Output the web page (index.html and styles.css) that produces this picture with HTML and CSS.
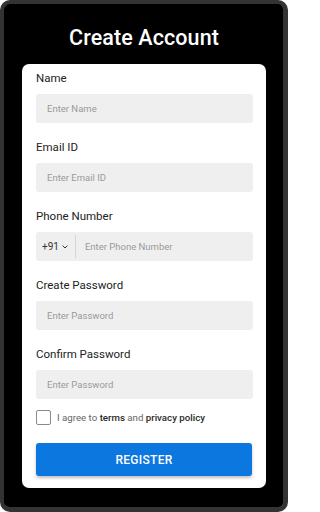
FILE: index.html
```html
<!DOCTYPE html>
<html>
<head>
<meta charset="utf-8">
<link rel="stylesheet" href="styles.css">
</head>
<body>
<div class="frame">
  <h1 class="title">Create Account</h1>
  <form class="card">
    <div class="field">
      <label class="label">Name</label>
      <div class="input"><span class="ph">Enter Name</span></div>
    </div>
    <div class="field">
      <label class="label">Email ID</label>
      <div class="input"><span class="ph">Enter Email ID</span></div>
    </div>
    <div class="field">
      <label class="label">Phone Number</label>
      <div class="input phone">
        <span class="code">+91
          <svg class="chev" width="6" height="4" viewBox="0 0 6 4"><path d="M0.6 0.6 L3 3 L5.4 0.6" fill="none" stroke="#333" stroke-width="1"/></svg>
        </span>
        <span class="divider"></span>
        <span class="ph">Enter Phone Number</span>
      </div>
    </div>
    <div class="field">
      <label class="label">Create Password</label>
      <div class="input"><span class="ph">Enter Password</span></div>
    </div>
    <div class="field">
      <label class="label">Confirm Password</label>
      <div class="input"><span class="ph">Enter Password</span></div>
    </div>
    <div class="agree">
      <span class="box"></span>
      <span class="agree-text">I agree to <b>terms</b> and <b>privacy policy</b></span>
    </div>
    <div class="btn">REGISTER</div>
  </form>
</div>
</body>
</html>
```
FILE: styles.css
```css
html, body {
  margin: 0;
  padding: 0;
  background: #ffffff;
}
body {
  font-family: Roboto, "Liberation Sans", sans-serif;
}
.frame {
  box-sizing: border-box;
  width: 288px;
  height: 512px;
  background: #000;
  border: 4px solid #333333;
  border-right-width: 5px;
  border-bottom-width: 5px;
  border-radius: 10px;
  padding: 22px 17px 0 18px;
}
.title {
  margin: 0;
  color: #fff;
  font-size: 21.5px;
  font-weight: 500;
  line-height: 24px;
  text-align: center;
  letter-spacing: 0.1px;
}
.card {
  margin: 14px 0 0 0;
  background: #fff;
  border-radius: 7px;
  padding: 6px 13px 12px 14px;
  display: flex;
  flex-direction: column;
}
.field {
  display: flex;
  flex-direction: column;
  margin-bottom: 16px;
}
.label {
  font-size: 11.5px;
  line-height: 16px;
  color: #222;
  margin-bottom: 8px;
}
.input {
  height: 29px;
  background: #efefef;
  border-radius: 3px;
  display: flex;
  align-items: center;
  padding-left: 11px;
}
.ph {
  font-size: 9.5px;
  color: #9a9a9a;
}
.phone {
  padding-left: 6px;
}
.code {
  font-size: 10px;
  color: #333;
  display: flex;
  align-items: center;
  gap: 3px;
}
.chev {
  margin-top: 1px;
}
.divider {
  width: 1px;
  height: 23px;
  background: #d6d6d6;
  margin: 0 9px 0 7px;
}
.agree {
  display: flex;
  align-items: center;
  margin-top: -5px;
}
.box {
  box-sizing: border-box;
  width: 15px;
  height: 15px;
  border: 1px solid #8a8a8a;
  border-radius: 2px;
  margin-right: 6px;
}
.agree-text {
  font-size: 9.7px;
  color: #666;
}
.agree-text b {
  font-weight: 500;
  color: #2a2a2a;
}
.btn {
  margin-top: 18px;
  height: 33px;
  width: 216px;
  background: #0b77df;
  border-radius: 3px;
  color: #fff;
  font-size: 12px;
  font-weight: 500;
  letter-spacing: 0.3px;
  display: flex;
  align-items: center;
  justify-content: center;
  box-shadow: 0 2px 3px rgba(0,0,0,0.25);
}
```
